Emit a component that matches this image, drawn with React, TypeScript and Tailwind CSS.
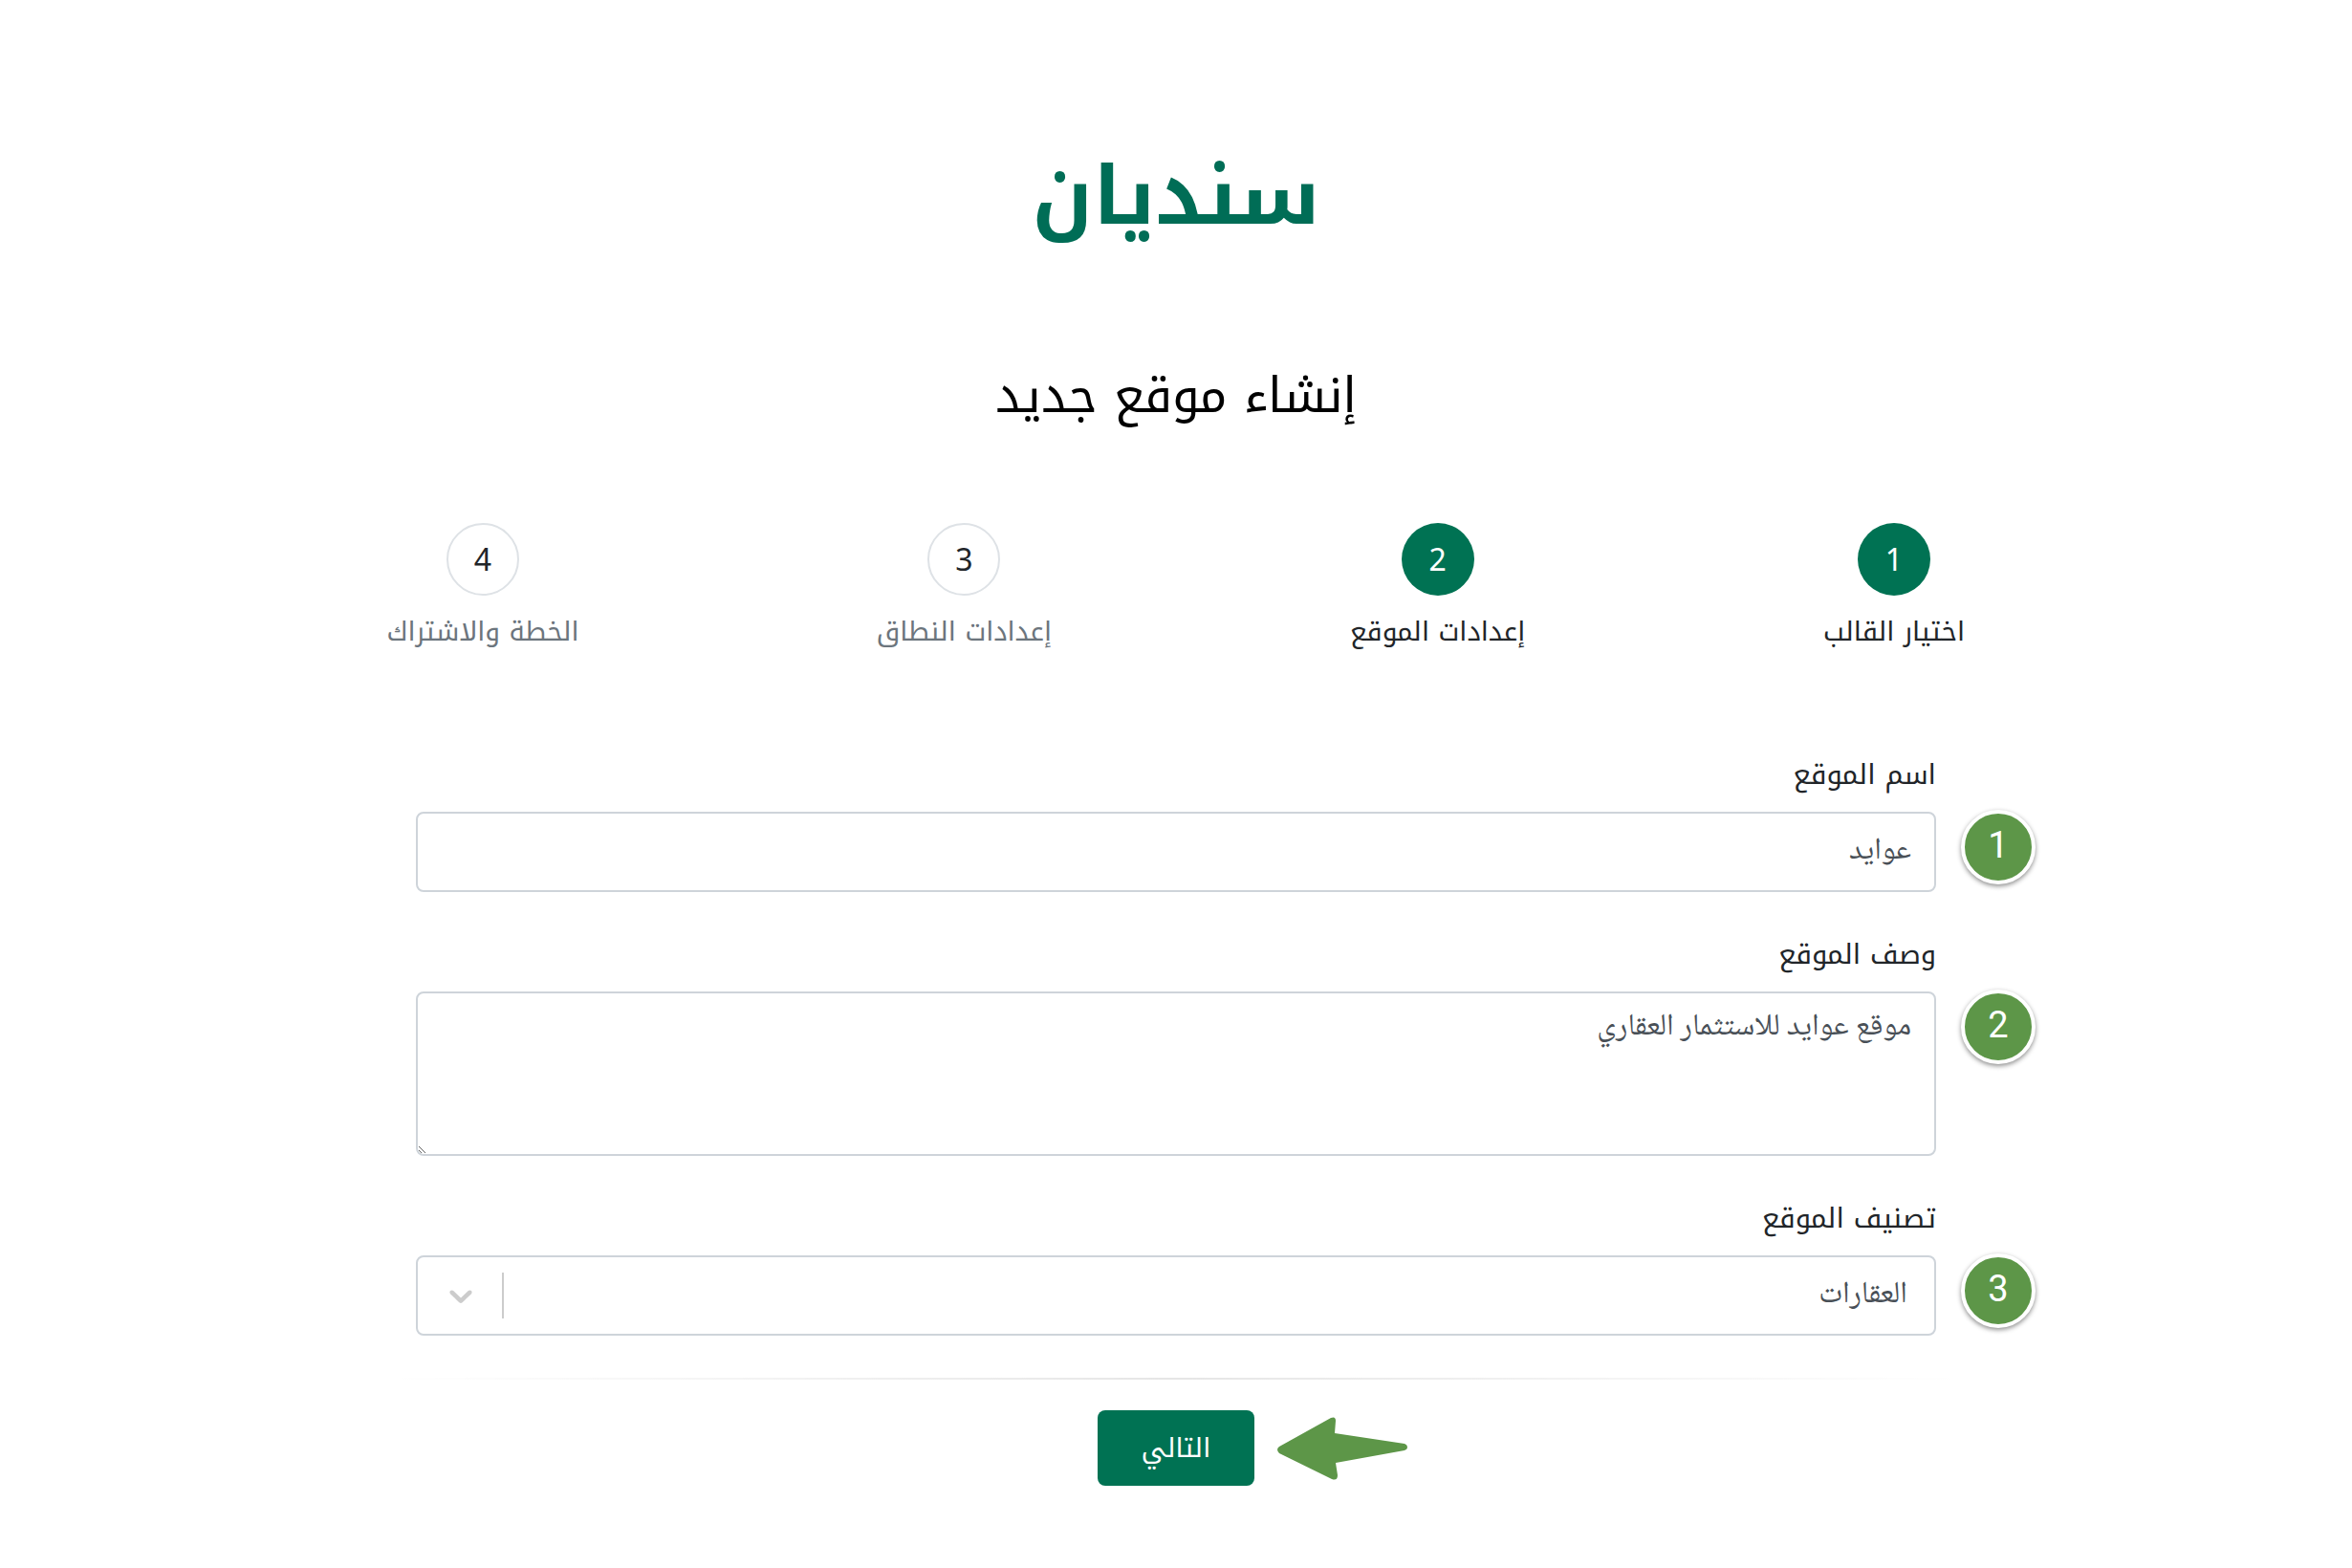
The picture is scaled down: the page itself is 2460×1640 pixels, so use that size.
import type { JSX, ReactNode } from "react";

type Step = {
    id: number;
    title: string;
    width: string;
    done: boolean;
};

const steps: Step[] = [
    { id: 1, title: "اختيار القالب", width: "w-[148px]", done: true },
    { id: 2, title: "إعدادات الموقع", width: "w-[184px]", done: true },
    { id: 3, title: "إعدادات النطاق", width: "w-[184px]", done: false },
    { id: 4, title: "الخطة والاشتراك", width: "w-[200px]", done: false },
];

const control = "block w-full rounded-lg border-2 border-[#ced4da] bg-white text-[32px] text-[#495057] outline-none font-['Noto_Naskh_Arabic','DejaVu_Sans',sans-serif]";

function Logo(): JSX.Element {
    return (
        <a href="#" className="block text-[84px] leading-[120px] font-bold text-[#006d56]">سنديان</a>
    );
}

function StepItem({ step }: { step: Step }): JSX.Element {
    return (
        <li className={`flex flex-col items-center ${step.width}`}>
            <span
                className={`flex size-[76px] items-center justify-center rounded-full text-[32px] font-['Noto_Sans','Open_Sans',sans-serif] ${step.done ? "bg-[#007253] text-white" : "border-2 border-[#dee2e6] bg-white text-[#212529]"}`}
            >
                {step.id}
            </span>
            <span className={`mt-[14px] text-[28px] leading-12 whitespace-nowrap ${step.done ? "text-[#212529]" : "text-[#6c757d]"}`}>
                {step.title}
            </span>
        </li>
    );
}

function Field({ id, label, badge, children }: { id: string; label: string; badge: number; children: ReactNode }): JSX.Element {
    return (
        <div className="mb-9">
            <label htmlFor={id} className="block pb-2 text-[29px] leading-15 text-[#212529]">{label}</label>
            <div className="relative">
                {children}
                <span className="absolute -top-[2px] -right-[104px] flex size-[78px] items-center justify-center rounded-full border-4 border-white bg-[#5d9648] pb-1 text-[38px] text-white shadow-[0_2px_5px_rgba(0,0,0,0.45)] font-[Roboto,'Liberation_Sans',sans-serif]">
                    {badge}
                </span>
            </div>
        </div>
    );
}

function App(): JSX.Element {
    return (
        <main dir="rtl" className="min-h-screen bg-white px-8 pt-[146px] pb-20 font-['Noto_Kufi_Arabic','DejaVu_Sans',sans-serif]">
            <div className="mx-auto max-w-[1650px]">
                <header className="flex flex-col items-center">
                    <Logo />
                    <h1 className="mt-[108px] text-[51px] leading-20 text-black">إنشاء موقع جديد</h1>
                </header>

                <ol className="mt-[93px] flex justify-between">
                    {steps.map((step) => <StepItem key={step.id} step={step} />)}
                </ol>

                <form className="mx-[30px] mt-24" onSubmit={(e) => e.preventDefault()}>
                    <Field id="site-name" label="اسم الموقع" badge={1}>
                        <input id="site-name" type="text" defaultValue="عوايد" className={`${control} h-[84px] px-6`} />
                    </Field>
                    <Field id="site-description" label="وصف الموقع" badge={2}>
                        <textarea id="site-description" defaultValue="موقع عوايد للاستثمار العقاري" className={`${control} h-[172px] px-6 py-3 leading-12`} />
                    </Field>
                    <Field id="site-category" label="تصنيف الموقع" badge={3}>
                        <select id="site-category" defaultValue="estate" className={`${control} h-[84px] appearance-none px-7`}>
                            <option value="estate">العقارات</option>
                        </select>
                        <div className="pointer-events-none absolute inset-y-[18px] left-0 flex w-[92px] items-center justify-center border-r-2 border-[#cccccc] pl-1">
                            <svg viewBox="0 0 20 20" className="size-10 fill-[#cccccc]" aria-hidden="true">
                                <path d="M4.516 7.548c0.436-0.446 1.043-0.481 1.576 0l3.908 3.747 3.908-3.747c0.533-0.481 1.141-0.446 1.574 0 0.436 0.445 0.408 1.197 0 1.615-0.406 0.418-4.695 4.502-4.695 4.502-0.217 0.223-0.502 0.335-0.787 0.335s-0.57-0.112-0.789-0.335c0 0-4.287-4.084-4.695-4.502s-0.436-1.17 0-1.615z" />
                            </svg>
                        </div>
                    </Field>

                    <hr className="-mx-[30px] mt-11 h-[2px] border-0 bg-linear-to-r from-transparent via-black/10 to-transparent" />

                    <div className="mt-8 flex justify-center">
                        <div className="relative">
                            <button type="submit" className="block h-[79px] w-[164px] cursor-pointer rounded-lg bg-[#007253] text-[28px] text-white">التالي</button>
                            <svg viewBox="0 0 136 66" className="absolute top-[7px] -right-[160px] h-[66px] w-[136px] fill-[#5d9648]" aria-hidden="true">
                                <path d="M2 31 L56 1 Q61 -1 61 4 L60 17 L133 28 Q136 29 136 32 Q136 34 133 35 L61 48 L63 61 Q63 67 57 65 L2 38 Q-2 34 2 31 Z" />
                            </svg>
                        </div>
                    </div>
                </form>
            </div>
        </main>
    );
}

export default App;
